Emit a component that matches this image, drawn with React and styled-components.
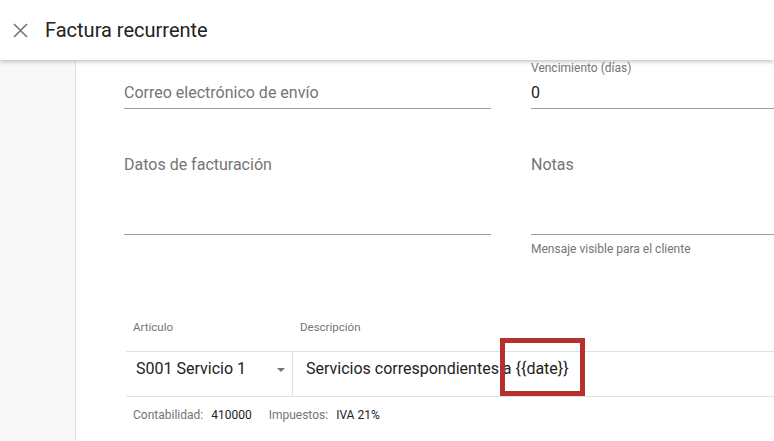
import React from 'react';
import styled, {createGlobalStyle} from 'styled-components';

const GlobalStyle = createGlobalStyle`
  html, body {
    margin: 0;
    padding: 0;
    background: #fff;
    overflow: hidden;
  }
  body {
    font-family: Roboto, "Liberation Sans", Arial, sans-serif;
    color: #222;
  }
`;

const Page = styled.div`
  width: 774px;
  height: 441px;
  display: flex;
  flex-direction: column;
  overflow: hidden;
`;

const Header = styled.header`
  position: relative;
  z-index: 2;
  height: 60px;
  flex: 0 0 60px;
  display: flex;
  align-items: center;
  gap: 17px;
  padding-left: 13px;
  background: #fff;
  box-shadow: 0 1px 5px rgba(0, 0, 0, 0.3);
`;

const CloseButton = styled.button`
  width: 15px;
  height: 15px;
  padding: 0;
  border: 0;
  background: none;
  display: flex;
  svg { display: block; }
`;

const Title = styled.h1`
  margin: 0 0 1px;
  font-size: 20px;
  font-weight: 400;
  color: #222;
  letter-spacing: 0;
`;

const Body = styled.div`
  flex: 1;
  display: flex;
  min-height: 0;
`;

const Sidebar = styled.aside`
  width: 75px;
  flex: 0 0 75px;
  background: #f8f8f8;
  border-right: 1px solid #e3e3e3;
`;

const Content = styled.main`
  flex: 1;
  padding-left: 48px;
  overflow: hidden;
`;

const FormGrid = styled.div`
  display: grid;
  grid-template-columns: 367px 367px;
  column-gap: 40px;
  margin-top: ${({$top}) => $top || 0}px;
`;

const Field = styled.div`
  display: flex;
  flex-direction: column;
`;

const FloatLabel = styled.label`
  height: 17px;
  line-height: 16px;
  font-size: 12px;
  color: #757575;
  white-space: nowrap;
`;

const InputLine = styled.div`
  height: 31px;
  line-height: 31px;
  font-size: 16px;
  color: ${({$placeholder}) => ($placeholder ? '#757575' : '#222')};
  border-bottom: 1px solid #9e9e9e;
  white-space: nowrap;
`;

const TextArea = styled.div`
  height: 81px;
  line-height: 24px;
  font-size: 16px;
  color: #757575;
  border-bottom: 1px solid #9e9e9e;
  white-space: nowrap;
`;

const Helper = styled.div`
  margin-top: 7px;
  line-height: 14px;
  font-size: 12px;
  color: #757575;
`;

const Items = styled.section`
  margin-top: 64px;
  margin-left: 2px;
`;

const ItemsHead = styled.div`
  display: grid;
  grid-template-columns: 166px 1fr;
  height: 31px;
  font-size: 11.5px;
  color: #757575;
  line-height: 14px;
`;

const HeadCell = styled.div`
  padding-left: ${({$pad}) => $pad}px;
  white-space: nowrap;
`;

const ItemRow = styled.div`
  display: grid;
  grid-template-columns: 166px 1fr;
  height: 44px;
  border-top: 1px solid #e0e0e0;
  border-bottom: 1px solid #e0e0e0;
`;

const Cell = styled.div`
  position: relative;
  display: flex;
  align-items: flex-start;
  padding: 7px 0 0 ${({$pad}) => $pad}px;
  font-size: 16px;
  line-height: 20px;
  color: #222;
  white-space: nowrap;
  border-left: ${({$divider}) => ($divider ? '1px solid #e0e0e0' : '0')};
`;

const SelectValue = styled.span`
  flex: 1;
`;

const Caret = styled.span`
  width: 0;
  height: 0;
  margin: 9px 7px 0 0;
  border-left: 4px solid transparent;
  border-right: 4px solid transparent;
  border-top: 4px solid #757575;
`;

const Highlight = styled.span`
  position: absolute;
  left: 207px;
  top: -14px;
  width: 75px;
  height: 48px;
  border: 5px solid #b5302f;
  pointer-events: none;
`;

const Meta = styled.div`
  display: flex;
  gap: 17px;
  padding: 11px 0 0 7px;
  font-size: 12px;
  line-height: 14px;
`;

const MetaItem = styled.span`
  color: #757575;
  b {
    font-weight: 400;
    color: #222;
    margin-left: 8px;
  }
`;

const CloseIcon = () => (
    <svg width="15" height="15" viewBox="0 0 15 15">
        <path d="M1 1 L14 14 M14 1 L1 14" stroke="#757575" strokeWidth="1.6" fill="none"/>
    </svg>
);

const App = () => {
    return (<>
        <GlobalStyle/>
        <Page>
            <Header>
                <CloseButton type="button" aria-label="Cerrar"><CloseIcon/></CloseButton>
                <Title>Factura recurrente</Title>
            </Header>
            <Body>
                <Sidebar/>
                <Content>
                    <FormGrid>
                        <Field>
                            <FloatLabel/>
                            <InputLine $placeholder>Correo electrónico de envío</InputLine>
                        </Field>
                        <Field>
                            <FloatLabel>Vencimiento (días)</FloatLabel>
                            <InputLine>0</InputLine>
                        </Field>
                    </FormGrid>
                    <FormGrid $top={27}>
                        <Field>
                            <FloatLabel/>
                            <TextArea>Datos de facturación</TextArea>
                        </Field>
                        <Field>
                            <FloatLabel/>
                            <TextArea>Notas</TextArea>
                            <Helper>Mensaje visible para el cliente</Helper>
                        </Field>
                    </FormGrid>
                    <Items>
                        <ItemsHead>
                            <HeadCell $pad={7}>Artículo</HeadCell>
                            <HeadCell $pad={8}>Descripción</HeadCell>
                        </ItemsHead>
                        <ItemRow>
                            <Cell $pad={10}>
                                <SelectValue>S001 Servicio 1</SelectValue>
                                <Caret/>
                            </Cell>
                            <Cell $pad={13} $divider>
                                Servicios correspondientes a {'{{date}}'}
                                <Highlight/>
                            </Cell>
                        </ItemRow>
                        <Meta>
                            <MetaItem>Contabilidad:<b>410000</b></MetaItem>
                            <MetaItem>Impuestos:<b>IVA 21%</b></MetaItem>
                        </Meta>
                    </Items>
                </Content>
            </Body>
        </Page>
    </>);
};

export default App;
